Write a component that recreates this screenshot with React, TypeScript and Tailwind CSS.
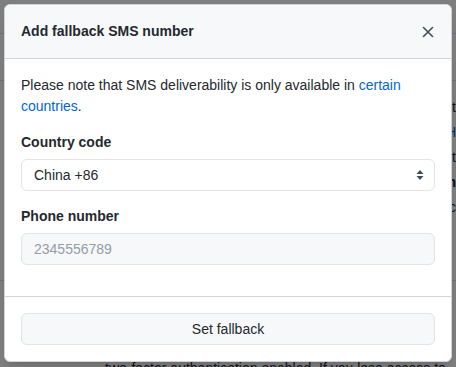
const font = { fontFamily: '"Liberation Sans", Arial, sans-serif' };

const CloseIcon = () => (
  <svg width="12" height="12" viewBox="0 0 12 12" fill="none" stroke="currentColor" strokeWidth="1.6" strokeLinecap="round" aria-hidden>
    <path d="M1.5 1.5 L10.5 10.5 M10.5 1.5 L1.5 10.5" />
  </svg>
);

const SelectArrows = () => (
  <svg width="8" height="12" viewBox="0 0 8 12" fill="#444d56" aria-hidden>
    <path d="M4 1 L7.5 5 H0.5 Z" />
    <path d="M4 11 L0.5 7 H7.5 Z" />
  </svg>
);

const BackgroundPage = () => (
  <div className="h-full w-full bg-white text-[14px] text-[#24292e]">
    <div className="h-[34px] border-b border-[#e1e4e8]" />
    <div className="flex h-[47px] items-center justify-end border-b border-[#e1e4e8] pr-1">
      <span className="text-[#cb2431]">t</span>
    </div>
    <div className="flex flex-col items-end gap-1 pt-4 pr-0">
      <span>t</span>
      <span className="text-[#0366d6]">H</span>
      <span>t</span>
      <span className="font-bold">n</span>
      <span>c</span>
    </div>
    <div className="mt-[62px] border-b border-[#e1e4e8]" />
    <div className="pl-[105px] pt-[77px] leading-[21px]">
      two-factor authentication enabled. If you lose access to your
    </div>
  </div>
);

export default function App() {
  return (
    <div className="relative h-[367px] w-[456px] overflow-hidden" style={font}>
      <BackgroundPage />
      <div className="absolute inset-0 bg-[rgba(0,0,0,0.5)]" />

      <div className="absolute left-[4px] top-[4px] w-[448px] overflow-hidden rounded-[6px] border border-[#d1d5da] bg-white text-[14px] leading-[21px] text-[#24292e] shadow-lg">
        {/* Header */}
        <div className="flex items-center justify-between border-b border-[#d1d5da] bg-[#f6f8fa] p-4">
          <h3 className="text-[14px] font-bold">Add fallback SMS number</h3>
          <button className="mr-[1px] flex text-[#444d56]">
            <CloseIcon />
          </button>
        </div>

        {/* Body */}
        <div className="px-4 pt-4 pb-4">
          <p>
            Please note that SMS deliverability is only available in{" "}
            <a className="text-[#0366d6]">certain countries</a>.
          </p>

          <div className="my-[15px]">
            <label className="mb-[6px] block font-bold">Country code</label>
            <div className="flex h-[32px] items-center justify-between rounded-[6px] border border-[#e1e4e8] bg-white pr-[10px] pl-[12px]">
              <span>China +86</span>
              <SelectArrows />
            </div>
          </div>

          <div className="mt-[15px] mb-[15px]">
            <label className="mb-[6px] block font-bold">Phone number</label>
            <div className="flex h-[32px] items-center rounded-[6px] border border-[#e1e4e8] bg-[#f6f8fa] pl-[12px] text-[#959da5]">
              2345556789
            </div>
          </div>
        </div>

        {/* Footer */}
        <div className="border-t border-[#d1d5da] p-4">
          <button className="flex h-[32px] w-full items-center justify-center rounded-[6px] border border-[#e1e4e8] bg-[#f6f8fa] text-[14px] text-[#24292e]">
            Set fallback
          </button>
        </div>
      </div>
    </div>
  );
}
